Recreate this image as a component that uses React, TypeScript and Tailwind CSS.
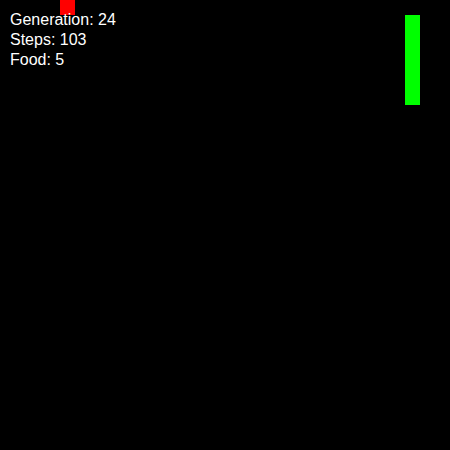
import React from "react";

const CELL = 15;

// grid cells (15px each)
const food = { x: 4, y: 0 };
const snake = [
  { x: 27, y: 1 },
  { x: 27, y: 2 },
  { x: 27, y: 3 },
  { x: 27, y: 4 },
  { x: 27, y: 5 },
  { x: 27, y: 6 },
];

const stats = [
  { label: "Generation", value: 24 },
  { label: "Steps", value: 103 },
  { label: "Food", value: 5 },
];

export default function App() {
  return (
    <div className="relative w-[450px] h-[450px] bg-black overflow-hidden font-['Liberation_Sans',Arial,sans-serif]">
      {/* food */}
      <div
        className="absolute w-[15px] h-[15px] bg-[#ff0000]"
        style={{ left: food.x * CELL, top: food.y * CELL }}
      />
      {/* snake body */}
      {snake.map((s, i) => (
        <div
          key={i}
          className="absolute w-[15px] h-[15px] bg-[#00ff00]"
          style={{ left: s.x * CELL, top: s.y * CELL }}
        />
      ))}
      {/* stats overlay */}
      <div className="absolute left-[10px] top-[9.5px] flex flex-col text-white text-[16px] leading-[20px]">
        {stats.map(s => (
          <div key={s.label}>
            {s.label}: {s.value}
          </div>
        ))}
      </div>
    </div>
  );
}
